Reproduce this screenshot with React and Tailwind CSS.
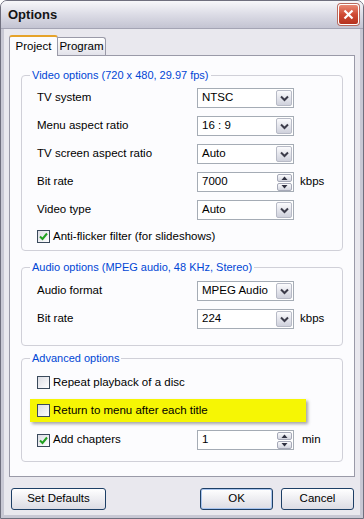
import React from "react";

const font = { fontFamily: '"Liberation Sans", Arial, sans-serif' };

const Chevron = () => (
  <svg width="9" height="7" viewBox="0 0 9 7">
    <path d="M1 1.5 L4.5 5 L8 1.5" fill="none" stroke="#3c3c4a" strokeWidth="2" />
  </svg>
);

const Select = ({ value }) => (
  <div className="flex items-center w-[97px] h-[20px] border border-[#a5acb5] bg-white pl-[4px] pr-[1px]">
    <span className="flex-1 text-[11.5px] text-black leading-none">{value}</span>
    <div className="w-[16px] h-[16px] flex items-center justify-center rounded-[2px] border border-[#b7bac6] bg-gradient-to-b from-[#fbfbfd] to-[#cfd1dc]">
      <Chevron />
    </div>
  </div>
);

const SpinBtn = ({ up }) => (
  <div className="w-[15px] h-[8px] flex items-center justify-center rounded-[2px] border border-[#a6a9b8] bg-gradient-to-b from-[#fbfbfd] to-[#d3d5df]">
    <svg width="7" height="4" viewBox="0 0 7 4">
      <path d={up ? "M0.5 4 L3.5 0.5 L6.5 4 Z" : "M0.5 0 L3.5 3.5 L6.5 0 Z"} fill="#2f3040" />
    </svg>
  </div>
);

const Spin = ({ value }) => (
  <div className="flex items-center w-[97px] h-[20px] border border-[#a5acb5] bg-white pl-[4px] pr-[1px]">
    <span className="flex-1 text-[11.5px] text-black leading-none">{value}</span>
    <div className="flex flex-col gap-[1px]">
      <SpinBtn up />
      <SpinBtn />
    </div>
  </div>
);

const Check = ({ checked }) => (
  <div className="w-[13px] h-[13px] border border-[#3a4a5c] bg-gradient-to-br from-[#dcdde4] to-white flex items-center justify-center shrink-0">
    {checked && (
      <svg width="9" height="9" viewBox="0 0 9 9">
        <path d="M1 4.5 L3.5 7 L8 1.5" fill="none" stroke="#21a121" strokeWidth="2" />
      </svg>
    )}
  </div>
);

const Row = ({ label, children, unit }) => (
  <div className="flex items-center h-[28px]">
    <span className="w-[160px] text-[11.5px] text-black">{label}</span>
    {children}
    {unit && <span className="ml-[6px] text-[11.5px] text-black">{unit}</span>}
  </div>
);

const CheckRow = ({ label, checked, className = "" }) => (
  <div className={"flex items-center gap-[3px] " + className}>
    <Check checked={checked} />
    <span className="text-[11.5px] text-black">{label}</span>
  </div>
);

const Group = ({ title, className = "", children }) => (
  <fieldset className={"border border-[#d0d0d8] rounded-[4px] px-[15px] " + className}>
    <legend className="-ml-[7px] px-[2px] text-[11px] leading-[14px] text-[#0046d5]">{title}</legend>
    {children}
  </fieldset>
);

const Button = ({ children, className = "", focused }) => (
  <button
    className={
      "h-[22px] rounded-[3px] border border-[#1d3f66] bg-gradient-to-b from-white to-[#dcdce4] text-[11.5px] text-black " +
      (focused ? "shadow-[inset_0_0_0_1px_#a8c4ee] " : "") +
      className
    }
  >
    {children}
  </button>
);

export default function App() {
  return (
    <div
      className="w-[364px] h-[519px] flex flex-col bg-[#e9e8ee] border border-[#6f6f7e] rounded-t-[7px] overflow-hidden"
      style={font}
    >
      <div className="h-[28px] shrink-0 flex items-center justify-between pl-[7px] pr-[4px] bg-gradient-to-b from-[#f7f7fa] via-[#dcdce6] to-[#c4c4d2] border-b border-[#a4a4b4]">
        <span className="text-[13px] font-bold text-[#141414]">Options</span>
        <div className="w-[21px] h-[21px] rounded-[3px] border border-white bg-gradient-to-b from-[#e88a76] via-[#cf4a34] to-[#b5321f] flex items-center justify-center shadow-[0_0_0_1px_#b86a5e]">
          <svg width="11" height="11" viewBox="0 0 11 11">
            <path d="M1.5 1.5 L9.5 9.5 M9.5 1.5 L1.5 9.5" stroke="white" strokeWidth="2.2" />
          </svg>
        </div>
      </div>

      <div className="flex-1 flex flex-col px-[5px] border-x-[3px] border-b-[3px] border-[#c8c8d4]">
        <div className="flex items-end mt-[5px] h-[21px]">
          <div className="h-[21px] w-[49px] bg-[#fcfcfe] border border-b-0 border-[#9a9aa8] border-t-[#e6a32a] border-t-2 rounded-t-[3px] flex items-center justify-center text-[11.5px] text-black relative -mb-[1px] z-10">
            Project
          </div>
          <div className="h-[18px] w-[48px] bg-gradient-to-b from-white to-[#e2e2ea] border border-b-0 border-l-0 border-[#9a9aa8] rounded-tr-[3px] flex items-center justify-center text-[11.5px] text-black">
            Program
          </div>
        </div>

        <div className="h-[422px] bg-[#fcfcfe] border border-[#9a9aa8] pt-[12px] px-[11px]">
          <Group title="Video options (720 x 480, 29.97 fps)" className="pt-[2px] pb-[1px]">
            <Row label="TV system"><Select value="NTSC" /></Row>
            <Row label="Menu aspect ratio"><Select value="16 : 9" /></Row>
            <Row label="TV screen aspect ratio"><Select value="Auto" /></Row>
            <Row label="Bit rate" unit="kbps"><Spin value="7000" /></Row>
            <Row label="Video type"><Select value="Auto" /></Row>
            <CheckRow label="Anti-flicker filter (for slideshows)" checked className="h-[25px]" />
          </Group>

          <Group title="Audio options (MPEG audio, 48 KHz, Stereo)" className="mt-[9px] pt-[3px] pb-[12px]">
            <Row label="Audio format"><Select value="MPEG Audio" /></Row>
            <Row label="Bit rate" unit="kbps"><Select value="224" /></Row>
          </Group>

          <Group title="Advanced options" className="mt-[5px] pt-[4px] pb-[7px]">
            <CheckRow label="Repeat playback of a disc" className="h-[27px]" />
            <div className="mt-[3px] -ml-[7px] w-[276px] h-[23px] px-[7px] flex items-center bg-[#f6f604] shadow-[2px_2px_3px_rgba(0,0,0,0.35)]">
              <CheckRow label="Return to menu after each title" />
            </div>
            <div className="flex items-center h-[28px] mt-[4px]">
              <div className="w-[160px]">
                <CheckRow label="Add chapters" checked />
              </div>
              <Spin value="1" />
              <span className="ml-[8px] text-[11.5px] text-black">min</span>
            </div>
          </Group>
        </div>

        <div className="flex items-center mt-[11px] pl-[2px] pr-[1px]">
          <Button className="w-[95px]">Set Defaults</Button>
          <div className="flex-1" />
          <Button className="w-[73px]" focused>OK</Button>
          <Button className="w-[73px] ml-[8px]">Cancel</Button>
        </div>
      </div>
    </div>
  );
}
